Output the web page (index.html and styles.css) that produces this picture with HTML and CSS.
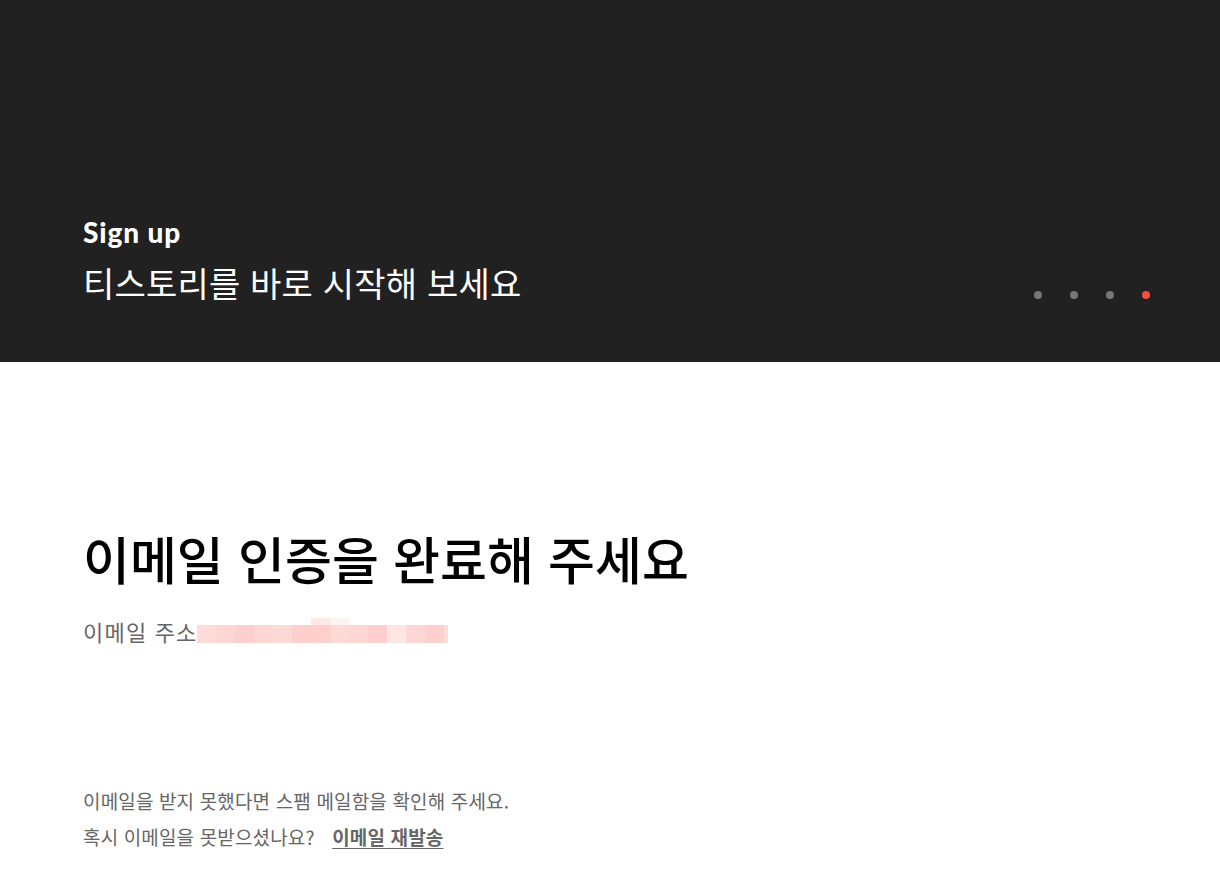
FILE: index.html
```html
<!DOCTYPE html>
<html lang="ko">
<head>
<meta charset="utf-8">
<title>Sign up - 이메일 인증</title>
<link rel="stylesheet" href="styles.css">
</head>
<body>
<header class="hero">
  <div class="hero-inner">
    <div class="hero-text">
      <p class="eyebrow">Sign up</p>
      <h1 class="hero-title">티스토리를 바로 시작해 보세요</h1>
    </div>
    <ol class="steps">
      <li class="dot"></li>
      <li class="dot"></li>
      <li class="dot"></li>
      <li class="dot on"></li>
    </ol>
  </div>
</header>
<main class="content">
  <h2 class="title">이메일 인증을 완료해 주세요</h2>
  <p class="addr">이메일 주소<span class="mosaic"><span class="cell a"></span><span class="cell b"></span><span class="cell c"></span><span class="cell b"></span><span class="cell d"></span><span class="cell c"></span><span class="cell c top1"></span><span class="cell d top2"></span><span class="cell b"></span><span class="cell c"></span><span class="cell e"></span><span class="cell b"></span><span class="cell c"></span><span class="cell a narrow"></span></span></p>
  <div class="notes">
    <p class="note">이메일을 받지 못했다면 스팸 메일함을 확인해 주세요.</p>
    <p class="note">혹시 이메일을 못받으셨나요? <a class="resend" href="#">이메일 재발송</a></p>
  </div>
</main>
</body>
</html>
```

FILE: styles.css
```css
* { box-sizing: border-box; }
html, body { margin: 0; padding: 0; }
body {
  background: #fff;
  font-family: "Noto Sans CJK KR", "Noto Sans", sans-serif;
  width: 1220px;
  height: 890px;
  overflow: hidden;
}
.hero {
  background: #212121;
  height: 362px;
  display: flex;
  align-items: flex-end;
}
.hero-inner {
  width: 100%;
  display: flex;
  align-items: flex-end;
  justify-content: space-between;
  padding: 0 70px 56px 83px;
}
.eyebrow {
  margin: 0;
  color: #fff;
  font-family: "Lato", "Noto Sans", sans-serif;
  font-weight: 900;
  font-size: 28px;
  line-height: 32px;
  letter-spacing: 0.9px;
}
.hero-title {
  margin: 12px 0 0;
  color: #fff;
  font-weight: 400;
  font-size: 34px;
  line-height: 46px;
  letter-spacing: 0.2px;
}
.steps {
  list-style: none;
  margin: 0 0 7px;
  padding: 0;
  display: flex;
  gap: 28px;
}
.dot {
  width: 8px;
  height: 8px;
  border-radius: 50%;
  background: #777;
}
.dot.on { background: #f5503c; }
.content {
  padding: 160px 83px 0;
}
.title {
  margin: 0;
  font-size: 51px;
  font-weight: 500;
  line-height: 72px;
  color: #000;
  letter-spacing: 0;
}
.addr {
  margin: 22px 0 0;
  font-size: 22px;
  line-height: 30px;
  color: #666;
  display: flex;
  align-items: center;
  letter-spacing: 1.2px;
}
.mosaic {
  display: flex;
  height: 18px;
  margin-left: -1px;
  margin-top: 6px;
}
.cell { width: 19px; height: 18px; position: relative; }
.cell.narrow { width: 4px; }
.cell.a { background: #fedcda; }
.cell.b { background: #fed6d3; }
.cell.c { background: #fecfcc; }
.cell.d { background: #fedad7; }
.cell.e { background: #ffe6e5; }
.top1::before, .top2::before {
  content: "";
  position: absolute;
  left: 0;
  top: -7px;
  width: 19px;
  height: 7px;
}
.top1::before { background: #ffe8e7; }
.top2::before { background: #fff4f4; }
.notes {
  margin-top: 137px;
}
.note {
  margin: 0;
  font-size: 19px;
  line-height: 36px;
  color: #666;
  letter-spacing: 0.15px;
}
.resend {
  color: #666;
  font-weight: 700;
  text-decoration: underline;
  text-underline-offset: 3px;
  margin-left: 12px;
}
```
